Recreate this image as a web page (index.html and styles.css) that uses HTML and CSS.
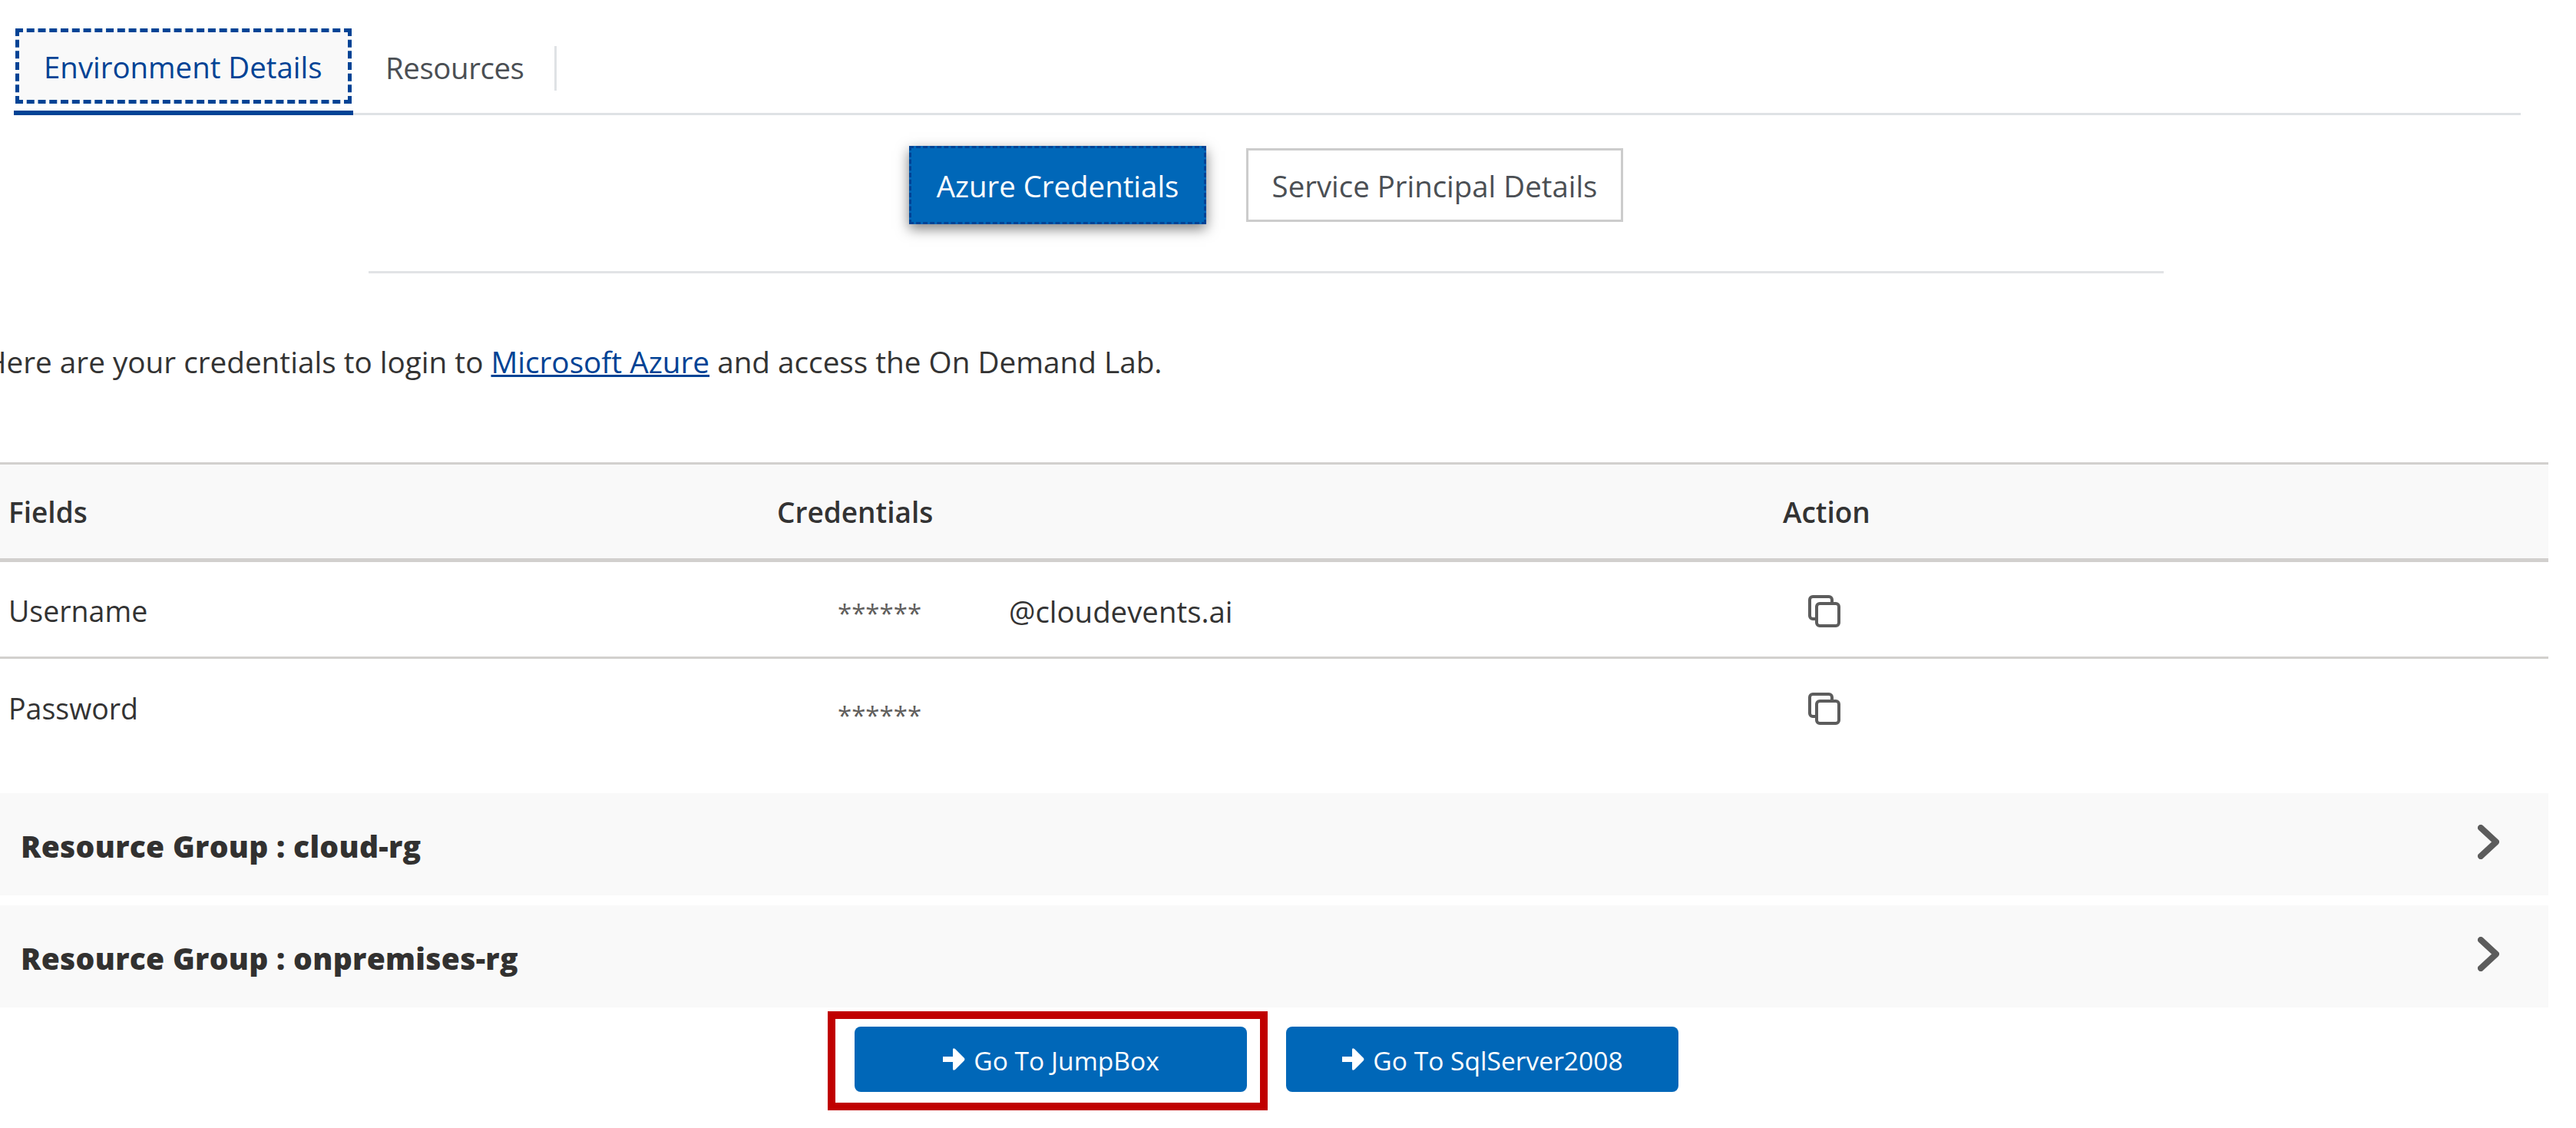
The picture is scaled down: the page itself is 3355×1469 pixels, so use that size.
FILE: index.html
```html
<!DOCTYPE html>
<html lang="en">
<head>
    <meta charset="UTF-8">
    <meta name="viewport" content="width=device-width, initial-scale=1.0">
    <title>Environment Details</title>
    <link rel="stylesheet" href="styles.css">
</head>
<body>
    <div class="page">
        <ul class="tabs">
            <li class="tab tab_active"><span class="tab_label">Environment Details</span></li>
            <li class="tab"><span class="tab_label">Resources</span></li>
        </ul>

        <div class="switch">
            <button class="switch_btn switch_on">Azure Credentials</button>
            <button class="switch_btn">Service Principal Details</button>
        </div>

        <p class="intro">Here are your credentials to login to <a href="#">Microsoft Azure</a> and access the On Demand Lab.</p>

        <table class="creds">
            <tr>
                <th class="col_field">Fields</th>
                <th class="col_value">Credentials</th>
                <th>Action</th>
            </tr>
            <tr>
                <td class="label">Username</td>
                <td><span class="mask">******</span><span class="domain">@cloudevents.ai</span></td>
                <td>
                    <svg class="copy" viewBox="0 0 42 42"><rect x="2" y="2" width="29" height="29" rx="4"/><rect x="11" y="11" width="29" height="29" rx="4"/></svg>
                </td>
            </tr>
            <tr>
                <td class="label">Password</td>
                <td><span class="mask mask_low">******</span></td>
                <td>
                    <svg class="copy" viewBox="0 0 42 42"><rect x="2" y="2" width="29" height="29" rx="4"/><rect x="11" y="11" width="29" height="29" rx="4"/></svg>
                </td>
            </tr>
        </table>

        <div class="group">
            <span>Resource Group : cloud-rg</span>
            <svg class="chevron" viewBox="0 0 28 45"><path d="M4 4l20 18.500L4 41"/></svg>
        </div>
        <div class="group">
            <span>Resource Group : onpremises-rg</span>
            <svg class="chevron" viewBox="0 0 28 45"><path d="M4 4l20 18.500L4 41"/></svg>
        </div>

        <div class="actions">
            <div class="mark">
                <button class="go">
                    <svg class="arrow" viewBox="0 0 30 31"><path d="M1 12h13V3q0-3 3-1l12 12q1 1.500 0 3L17 29q-3 2-3-1v-9H1z"/></svg>
                    <span class="go_text">Go To JumpBox</span>
                </button>
            </div>
            <button class="go go_next">
                <svg class="arrow" viewBox="0 0 30 31"><path d="M1 12h13V3q0-3 3-1l12 12q1 1.500 0 3L17 29q-3 2-3-1v-9H1z"/></svg>
                <span class="go_text">Go To SqlServer2008</span>
            </button>
        </div>
    </div>
</body>
</html>
```
FILE: styles.css
```css
html, body {
    margin: 0;
    background: #fff;
}
.page {
    width: 3319px;
    height: 1469px;
    overflow: hidden;
    font-family: "Open Sans", "Noto Sans", sans-serif;
    font-size: 38.4px;
    color: #333;
}

/* tabs */
.tabs {
    display: flex;
    list-style: none;
    margin: 0 0 0 18px;
    padding: 35px 0 0;
    width: 3265px;
    height: 112px;
    border-bottom: 3px solid #dfe2e5;
}
.tab {
    height: 115px;
    box-sizing: border-box;
    color: #4b4f54;
}
.tab_label {
    display: block;
    height: 58px;
    margin-top: 25px;
    line-height: 56px;
    padding: 0 39px 0 42px;
    border-right: 3px solid #dfe2e5;
    letter-spacing: -0.4px;
}
.tab_active {
    width: 442px;
    color: #004395;
    border-bottom: 6px solid #004395;
}
.tab_active .tab_label {
    margin: 2px 2px 0;
    height: 98px;
    line-height: 90px;
    padding: 0 0 0 32px;
    background: #f9f9f9;
    border: 5px dashed #004395;
    box-sizing: border-box;
    letter-spacing: 0;
    font-weight: 500;
}

/* switch */
.switch {
    display: flex;
    justify-content: center;
    align-items: center;
    gap: 52px;
    margin: 40px 0 0 480px;
    width: 2338px;
    height: 166px;
    box-sizing: border-box;
    padding-bottom: 61px;
    border-bottom: 3px solid #e1e3e6;
}
.switch_btn {
    font: inherit;
    height: 96px;
    width: 491px;
    padding-top: 3px;
    background: #fff;
    color: #4b4f54;
    border: 3px solid #ccc;
}
.switch_on {
    width: 387px;
    height: 102px;
    background: #0067b8;
    color: #fff;
    border: 3px dashed #004395;
    box-shadow: 0 6px 16px rgba(0, 0, 0, 0.5);
}

/* intro */
.intro {
    margin: 90px 0 0 -20px;
    line-height: 50px;
    font-size: 38.7px;
}
.intro a {
    color: #004395;
}

/* table */
.creds {
    border-collapse: separate;
    border-spacing: 0;
    width: 100%;
    margin-top: 106px;
    table-layout: fixed;
}
.creds th {
    text-align: left;
    font-weight: 600;
    font-size: 37px;
    height: 122px;
    padding: 0 0 0 11px;
    background: #f9f9f9;
    border-top: 3px solid #d2d0ce;
    border-bottom: 5px solid #d2d0ce;
}
.creds td {
    height: 126px;
    padding: 4px 0 0 11px;
    box-sizing: border-box;
    border-bottom: 3px solid #d2d0ce;
}
.creds tr:last-child td {
    height: 125px;
    border-bottom: 0;
}
.creds .label {
    font-size: 37.5px;
}
.col_field {
    width: 990px;
}
.col_value {
    width: 1299px;
}
.mask {
    display: inline-block;
    width: 223px;
    margin-left: 79px;
    font-size: 33px;
    color: #605e5c;
}
.mask_low {
    position: relative;
    top: 6px;
}
.copy {
    display: block;
    width: 42px;
    height: 42px;
    margin-left: 33px;
    fill: #fff;
    stroke: #5c5c5c;
    stroke-width: 4;
}

/* resource groups */
.group {
    display: flex;
    justify-content: space-between;
    align-items: center;
    height: 133px;
    margin-bottom: 13px;
    padding: 0 64px 0 27px;
    background: #f9f9f9;
    font-size: 39px;
    font-weight: 800;
    color: #323130;
    letter-spacing: 0.3px;
}
.group span {
    padding-top: 3px;
}
.creds + .group {
    margin-top: 50px;
}
.chevron {
    width: 28px;
    height: 45px;
    margin-bottom: 6px;
    fill: none;
    stroke: #5c5c5c;
    stroke-width: 8;
    stroke-linecap: round;
    stroke-linejoin: round;
}

/* bottom buttons */
.actions {
    display: flex;
    align-items: flex-start;
    margin: -8px 0 0 1078px;
}
.mark {
    border: 10px solid #c00000;
    padding: 10px 17px 14px 25px;
    margin-right: 24px;
}
.go {
    display: flex;
    justify-content: center;
    align-items: center;
    gap: 11px;
    width: 511px;
    height: 85px;
    background: #0067b8;
    color: #fff;
    border: 0;
    border-radius: 8px;
    font: inherit;
    font-size: 33.6px;
}
.go_text {
    padding-top: 2px;
}
.go_next {
    margin-top: 20px;
}
.arrow {
    width: 30px;
    height: 31px;
    fill: #fff;
}
```
